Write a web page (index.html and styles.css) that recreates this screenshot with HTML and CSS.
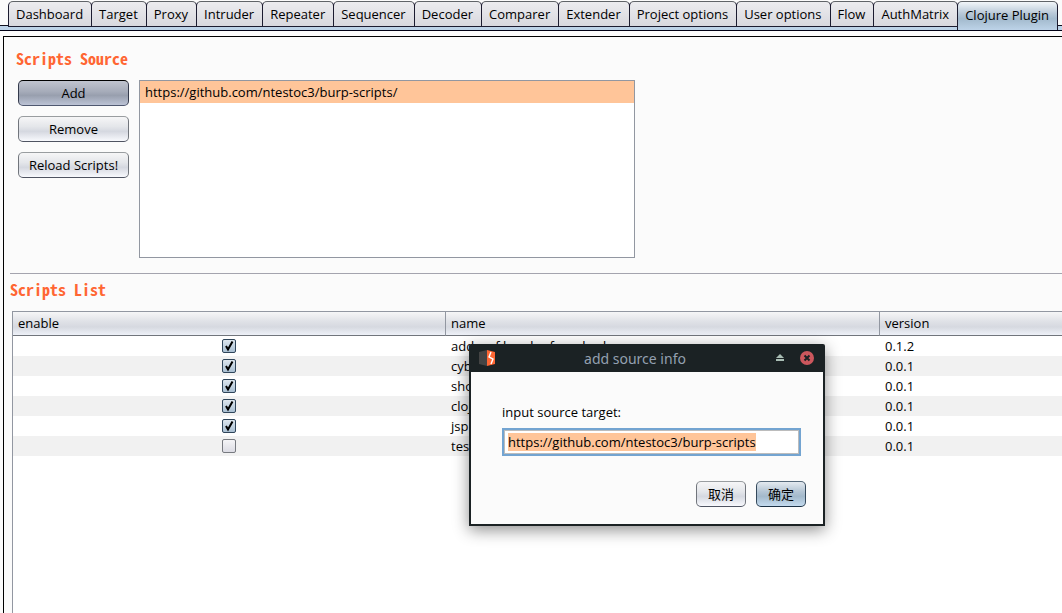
FILE: index.html
```html
<!DOCTYPE html>
<html lang="en">
<head>
  <meta charset="UTF-8">
  <title>Clojure Plugin</title>
  <link rel="stylesheet" href="styles.css">
</head>
<body>
  <nav class="tabs">
    <button class="tab">Dashboard</button>
    <button class="tab">Target</button>
    <button class="tab">Proxy</button>
    <button class="tab">Intruder</button>
    <button class="tab">Repeater</button>
    <button class="tab">Sequencer</button>
    <button class="tab">Decoder</button>
    <button class="tab">Comparer</button>
    <button class="tab">Extender</button>
    <button class="tab">Project options</button>
    <button class="tab">User options</button>
    <button class="tab">Flow</button>
    <button class="tab">AuthMatrix</button>
    <button class="tab active">Clojure Plugin</button>
  </nav>

  <main class="panel">
    <section class="source">
      <h2>Scripts Source</h2>
      <div class="source-row">
        <div class="source-buttons">
          <button class="btn pressed">Add</button>
          <button class="btn">Remove</button>
          <button class="btn">Reload Scripts!</button>
        </div>
        <ul class="source-list">
          <li class="selected">https://github.com/ntestoc3/burp-scripts/</li>
        </ul>
      </div>
    </section>

    <section class="scripts">
      <h2>Scripts List</h2>
      <div class="table-box">
        <table>
          <thead>
            <tr><th>enable</th><th>name</th><th>version</th></tr>
          </thead>
          <tbody>
            <tr><td><input type="checkbox" aria-label="enable add csrf header" checked></td><td>add csrf header from body</td><td>0.1.2</td></tr>
            <tr><td><input type="checkbox" aria-label="enable cyber" checked></td><td>cyber</td><td>0.0.1</td></tr>
            <tr><td><input type="checkbox" aria-label="enable show" checked></td><td>show</td><td>0.0.1</td></tr>
            <tr><td><input type="checkbox" aria-label="enable clojure" checked></td><td>clojure</td><td>0.0.1</td></tr>
            <tr><td><input type="checkbox" aria-label="enable jsp" checked></td><td>jsp</td><td>0.0.1</td></tr>
            <tr><td><input type="checkbox" aria-label="enable test"></td><td>test</td><td>0.0.1</td></tr>
          </tbody>
        </table>
      </div>
    </section>
  </main>

  <div class="dialog" role="dialog" aria-labelledby="dialogTitle">
    <div class="titlebar">
      <svg class="logo" width="16" height="16" viewBox="0 0 16 16">
        <path d="M0 2L8 0V16L0 14Z" fill="#444"/>
        <path d="M8 0L16 2V14L8 16Z" fill="#ff6633"/>
        <path d="M12 2L10 7L14 9L12 14" fill="none" stroke="#fff" stroke-width="1.4"/>
      </svg>
      <span class="title" id="dialogTitle">add source info</span>
      <button class="win-btn" aria-label="Shade">
        <svg width="8" height="8" viewBox="0 0 8 8">
          <path d="M4 0L8 4H0ZM0 5H8V7H0Z" fill="#a9beb4"/>
        </svg>
      </button>
      <button class="win-btn" aria-label="Close">
        <svg width="14" height="14" viewBox="0 0 14 14">
          <circle cx="7" cy="7" r="7" fill="#cc575d"/>
          <path d="M4.5 4.5L9.5 9.5M9.5 4.5L4.5 9.5" stroke="#1b2224" stroke-width="2"/>
        </svg>
      </button>
    </div>
    <form class="dialog-body">
      <label for="target">input source target:</label>
      <input type="text" id="target" value="https://github.com/ntestoc3/burp-scripts">
      <div class="dialog-buttons">
        <button type="button" class="btn">取消</button>
        <button type="button" class="btn default">确定</button>
      </div>
    </form>
  </div>

  <script>
    window.onload = function() {
      const target = document.getElementById('target');
      target.focus();
      target.select();
    }
  </script>
</body>
</html>
```

FILE: styles.css
```css
* {
  box-sizing: border-box;
}
body {
  margin: 0;
  height: 100vh;
  display: flex;
  flex-direction: column;
  overflow: hidden;
  background: #fbfbfb;
  color: #000;
  font-family: "Open Sans", "Noto Sans CJK SC", sans-serif;
  font-size: 13px;
}
button, input {
  font: inherit;
  color: inherit;
}
.tabs {
  display: flex;
  flex: none;
  height: 31px;
  padding: 1px 0 0 8px;
  border-bottom: 1px solid #000014;
  background: linear-gradient(#fbfbfb 25px, #11111f 25px, #11111f 26px, #bdd3e8 26px);
}
.tab {
  flex: none;
  height: 26px;
  margin: 0 0 0 -1px;
  padding: 0 8px 0 7px;
  border: 1px solid #1c1c30;
  border-top-color: #606468;
  border-radius: 5px 5px 0 0;
  background: linear-gradient(#ececef, #d8d8de);
}
.tab:first-child {
  margin-left: 0;
}
.tab.active {
  height: 29px;
  padding-bottom: 3px;
  border-bottom: none;
  background: linear-gradient(#f2f6f9, #b9c9d8 40%, #a3bacd 60%, #bdd3e8);
}
.panel {
  flex: 1;
  min-height: 0;
  display: flex;
  flex-direction: column;
  margin: 5px 0 0 3px;
  border: 1px solid #000;
  border-width: 1px 0 0 1px;
}
h2 {
  margin: 0;
  color: #ff6633;
  font-family: "Noto Sans Mono CJK SC", "Liberation Mono", monospace;
  font-size: 16px;
  line-height: 24px;
}
.source {
  margin-left: 6px;
  padding: 9px 6px 15px;
  border-bottom: 1px solid #a4a4ae;
}
.source-row {
  display: flex;
  gap: 10px;
  padding: 10px 0 0 2px;
}
.source-buttons {
  display: flex;
  flex-direction: column;
  gap: 10px;
  width: 111px;
}
.btn {
  height: 26px;
  padding: 0;
  border: 1px solid #71757c;
  border-color: #999da0 #71757c #4f5462;
  border-radius: 5px;
  background: linear-gradient(#f6f6f7, #e4e6ea 40%, #d5d8e0 60%, #f8f9fd);
}
.btn.pressed {
  border-color: #000 #343a4c #4f5870;
  background: linear-gradient(#c0c4cf, #a5abb9 45%, #989fae 60%, #bcc3d5);
}
.btn.default {
  border-color: #56697a #34495c #1c3145;
  background: linear-gradient(#e4eaf0, #b4c5d4 40%, #a3b9cb 60%, #c4dbef);
}
.source-list {
  width: 496px;
  height: 178px;
  margin: 0;
  padding: 0;
  border: 1px solid #9297a1;
  background: #fff;
  list-style: none;
}
.source-list li {
  padding: 0 5px;
  line-height: 22px;
}
.source-list .selected {
  background: #ffc599;
}
.scripts {
  flex: 1;
  display: flex;
  flex-direction: column;
  padding: 3px 0 0 6px;
}
.table-box {
  flex: 1;
  margin: 10px 0 0 2px;
  border: 1px solid #9297a1;
  border-width: 1px 0 0 1px;
  background: #fff;
}
table {
  width: 100%;
  border-collapse: separate;
  border-spacing: 0;
  table-layout: fixed;
}
th {
  height: 24px;
  padding: 0 5px 2px;
  border-bottom: 1px solid #71757c;
  background: linear-gradient(#f6f6f7, #e0e2e7 40%, #d6d9e0 65%, #eef1f8);
  font-weight: normal;
  text-align: left;
}
th:nth-child(-n+2) {
  width: 433px;
  border-right: 1px solid #9297a1;
}
th:nth-child(2) {
  width: 434px;
}
td {
  height: 20px;
  padding: 0 5px;
  line-height: 20px;
}
tbody tr:nth-child(even) {
  background: #f1f1f1;
}
td:first-child {
  padding: 0 1px 0 0;
  text-align: center;
}
input[type="checkbox"] {
  appearance: none;
  display: block;
  width: 14px;
  height: 14px;
  margin: 0 auto;
  border: 1px solid #777a80;
  border-radius: 2px;
  background: linear-gradient(#f5f5f7, #dcdce4);
}
input[type="checkbox"]:checked {
  border-color: #2f455a;
  background: url("data:image/svg+xml,%3Csvg xmlns='http://www.w3.org/2000/svg' viewBox='0 0 12 12'%3E%3Cpath d='M3 6L5 9.5L9.5 1.5' fill='none' stroke='%23000' stroke-width='2'/%3E%3C/svg%3E"), linear-gradient(#dde6ee, #a9bfd2);
}
.dialog {
  position: absolute;
  left: 469px;
  top: 344px;
  width: 356px;
  border: 2px solid #1b2224;
  border-top: none;
  border-radius: 2px 2px 0 0;
  background: #fbfbfb;
  box-shadow: 0 4px 16px rgba(0,0,0,0.45);
}
.titlebar {
  display: flex;
  align-items: center;
  height: 28px;
  padding: 0 8px;
  background: #1b2224;
  color: #94a0b0;
}
.title {
  flex: 1;
  padding-left: 14px;
  font-family: "Noto Sans", sans-serif;
  font-size: 14px;
  text-align: center;
}
.win-btn {
  display: flex;
  align-items: center;
  justify-content: center;
  width: 16px;
  height: 16px;
  margin-left: 11px;
  padding: 0;
  border: none;
  background: none;
}
.dialog-body {
  display: flex;
  flex-direction: column;
  padding: 31px 17px 17px 31px;
}
.dialog-body label {
  line-height: 18px;
}
#target {
  height: 28px;
  margin: 7px 5px 0 0;
  padding: 0 4px;
  border: 2px solid #73a4d1;
  outline: none;
  background: #fff;
  box-shadow: inset 0 0 0 1px #bcbcbc;
}
#target::selection {
  background: #ffc599;
  color: #000;
}
.dialog-buttons {
  display: flex;
  justify-content: flex-end;
  gap: 10px;
  margin-top: 25px;
}
.dialog-buttons .btn {
  width: 50px;
  padding-bottom: 2px;
}
```
